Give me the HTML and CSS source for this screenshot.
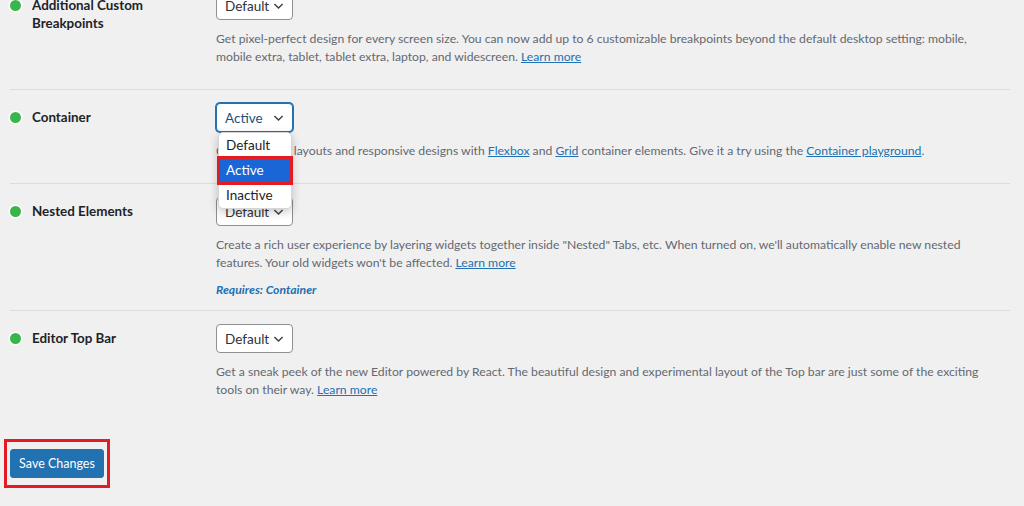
FILE: index.html
```html
<!DOCTYPE html>
<html lang="en">
<head>
<meta charset="utf-8">
<title>Features</title>
<link rel="stylesheet" href="styles.css">
</head>
<body>
<form class="settings">
  <div class="feature">
    <div class="feature-label">
      <span class="status-dot"></span>
      <span class="feature-name">Additional Custom Breakpoints</span>
    </div>
    <div class="feature-field">
      <div class="select"><span>Default</span><svg class="chev" viewBox="0 0 12 8" aria-hidden="true"><path d="M1.5 1.8 6 6.2l4.5-4.4"/></svg></div>
      <p class="desc">Get pixel-perfect design for every screen size. You can now add up to 6 customizable breakpoints beyond the default desktop setting: mobile, mobile extra, tablet, tablet extra, laptop, and widescreen. <a href="#">Learn more</a></p>
    </div>
  </div>

  <div class="feature">
    <div class="feature-label">
      <span class="status-dot"></span>
      <span class="feature-name">Container</span>
    </div>
    <div class="feature-field">
      <div class="select-wrap">
        <div class="select is-open"><span>Active</span><svg class="chev" viewBox="0 0 12 8" aria-hidden="true"><path d="M1.5 1.8 6 6.2l4.5-4.4"/></svg></div>
        <ul class="options">
          <li>Default</li>
          <li class="is-selected">Active</li>
          <li>Inactive</li>
        </ul>
      </div>
      <p class="desc">Create nested layouts and responsive designs with <a href="#">Flexbox</a> and <a href="#">Grid</a> container elements. Give it a try using the <a href="#">Container playground</a>.</p>
    </div>
  </div>

  <div class="feature">
    <div class="feature-label">
      <span class="status-dot"></span>
      <span class="feature-name">Nested Elements</span>
    </div>
    <div class="feature-field">
      <div class="select"><span>Default</span><svg class="chev" viewBox="0 0 12 8" aria-hidden="true"><path d="M1.5 1.8 6 6.2l4.5-4.4"/></svg></div>
      <p class="desc">Create a rich user experience by layering widgets together inside "Nested" Tabs, etc. When turned on, we'll automatically enable new nested features. Your old widgets won't be affected. <a href="#">Learn more</a></p>
      <p class="requires">Requires: Container</p>
    </div>
  </div>

  <div class="feature is-last">
    <div class="feature-label">
      <span class="status-dot"></span>
      <span class="feature-name">Editor Top Bar</span>
    </div>
    <div class="feature-field">
      <div class="select"><span>Default</span><svg class="chev" viewBox="0 0 12 8" aria-hidden="true"><path d="M1.5 1.8 6 6.2l4.5-4.4"/></svg></div>
      <p class="desc">Get a sneak peek of the new Editor powered by React. The beautiful design and experimental layout of the Top bar are just some of the exciting tools on their way. <a href="#">Learn more</a></p>
    </div>
  </div>

  <div class="submit">
    <span class="submit-frame"><button type="button" class="button-primary">Save Changes</button></span>
  </div>
</form>
</body>
</html>
```

FILE: styles.css
```css
* { box-sizing: border-box; }

html, body {
  margin: 0;
  padding: 0;
  background: #f0f0f1;
  height: 100%;
  overflow: hidden;
}

body {
  font-family: Lato, "Noto Sans", sans-serif;
  font-size: 12.2px;
  color: #1d2327;
}

.settings {
  margin: -22px 14px 0 10px;
}

/* one row of the features table */
.feature {
  display: flex;
  padding: 13px 0 23px;
  border-bottom: 1px solid #dcdcde;
}

.feature.is-last {
  border-bottom: 0;
  padding-bottom: 0;
}

.feature-label {
  width: 206px;
  flex: none;
  display: flex;
  align-items: flex-start;
  gap: 11px;
  padding-top: 6px;
}

.status-dot {
  flex: none;
  width: 11px;
  height: 11px;
  margin: 3px 0 0 0;
  border-radius: 50%;
  background: #39b54a;
  box-shadow: 0 0 0 1.5px #fff;
}

.feature-name {
  width: 150px;
  font-size: 13.4px;
  font-weight: 700;
  line-height: 17.5px;
  color: #1d2327;
}

.feature-field {
  flex: 1;
  max-width: 775px;
}

/* dropdown control */
.select-wrap {
  position: relative;
  width: 77px;
}

.select {
  width: 77px;
  height: 29px;
  display: flex;
  align-items: center;
  justify-content: space-between;
  padding: 0 8px 0 8px;
  background: #fff;
  border: 1px solid #8c8f94;
  border-radius: 4px;
  font-size: 13.5px;
  color: #2c3338;
}

.select.is-open {
  border-color: #2271b1;
  box-shadow: 0 0 0 1px #2271b1;
  color: #1e4f79;
}

.chev {
  width: 11px;
  height: 8px;
  fill: none;
  stroke: #3c434a;
  stroke-width: 1.6;
}

.options {
  position: absolute;
  top: 29px;
  left: 2px;
  width: 74px;
  margin: 0;
  padding: 0;
  list-style: none;
  background: #fff;
  border: 1px solid #d5d5d7;
  border-radius: 5px;
  box-shadow: 0 3px 10px rgba(0, 0, 0, 0.22);
  z-index: 2;
  font-size: 13.5px;
  color: #1d2327;
}

.options li {
  height: 25px;
  line-height: 25px;
  padding-left: 7px;
}

.options li.is-selected {
  background: #1a66d6;
  color: #fff;
  outline: 3px solid #e31b23;
  outline-offset: -1px;
  position: relative;
}

.desc {
  margin: 10px 0 0;
  font-size: 12.2px;
  line-height: 18px;
  color: #646970;
}

.desc a {
  color: #2271b1;
  text-decoration: underline;
}

.requires {
  margin: 9px 0 -12px;
  font-size: 12.2px;
  line-height: 18px;
  font-weight: 700;
  font-style: italic;
  color: #2271b1;
}

/* save bar */
.submit {
  padding: 40px 0 0;
  margin-left: -6px;
}

.submit-frame {
  display: inline-block;
  padding: 7px 3px 7px 3px;
  border: 3px solid #e31b23;
}

.button-primary {
  display: block;
  width: 94px;
  height: 29px;
  border: 1px solid #2271b1;
  border-radius: 3px;
  background: #2271b1;
  color: #fff;
  font-family: inherit;
  font-size: 12.5px;
  padding: 0;
  cursor: pointer;
}
```
